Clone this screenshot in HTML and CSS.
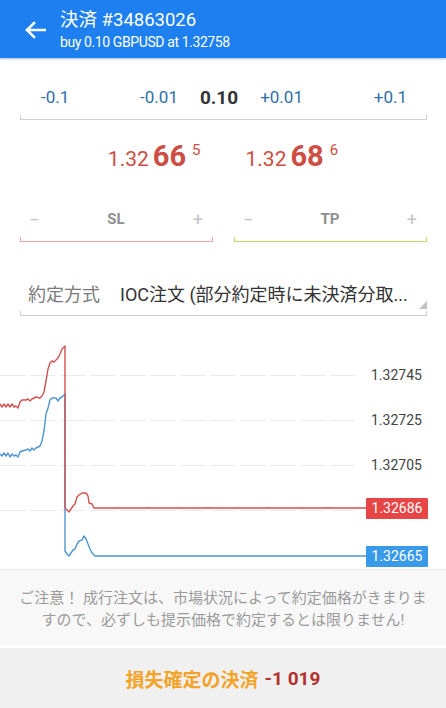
FILE: index.html
```html
<!DOCTYPE html>
<html lang="ja">
<head>
  <meta charset="UTF-8" />
  <meta name="viewport" content="width=device-width, initial-scale=1.0" />
  <title>決済 #34863026</title>
  <link rel="stylesheet" href="styles.css">
</head>
<body>

  <div class="header">
    <svg class="back" width="22" height="18" viewBox="0 0 22 18">
      <path d="M21 9H3M10 2L3 9l7 7" fill="none" stroke="#fff" stroke-width="2.6" stroke-linecap="square"/>
    </svg>
    <div class="titles">
      <div class="title">決済 #34863026</div>
      <div class="subtitle">buy 0.10 GBPUSD at 1.32758</div>
    </div>
  </div>

  <!-- volume stepper -->
  <div class="volume">
    <div class="vol-row">
      <span class="step">-0.1</span>
      <div class="vol-mid">
        <span class="step">-0.01</span>
        <span class="vol-value">0.10</span>
        <span class="step">+0.01</span>
      </div>
      <span class="step">+0.1</span>
    </div>
    <div class="underline"></div>
  </div>

  <div class="prices">
    <span class="price">1.32<b>66</b><sup>5</sup></span>
    <span class="price">1.32<b>68</b><sup>6</sup></span>
  </div>

  <div class="sltp">
    <div class="field">
      <div class="field-row"><span class="pm">−</span><span class="field-name">SL</span><span class="pm">+</span></div>
      <div class="underline sl"></div>
    </div>
    <div class="field">
      <div class="field-row"><span class="pm">−</span><span class="field-name">TP</span><span class="pm">+</span></div>
      <div class="underline tp"></div>
    </div>
  </div>

  <div class="fill">
    <div class="fill-row">
      <span class="fill-label">約定方式</span>
      <span class="fill-value">IOC注文 (部分約定時に未決済分取...</span>
      <span class="corner"></span>
    </div>
    <div class="underline"></div>
  </div>

  <div class="chart">
    <svg width="446" height="233" viewBox="0 0 446 233">
      <g stroke="#ebebeb" stroke-width="1" stroke-dasharray="26 4">
        <line x1="0" y1="39.5" x2="355" y2="39.5"/>
        <line x1="0" y1="84.5" x2="355" y2="84.5"/>
        <line x1="0" y1="129.5" x2="355" y2="129.5"/>
        <line x1="0" y1="174.5" x2="355" y2="174.5"/>
      </g>
      <polyline fill="none" stroke="#4f95cf" stroke-width="1.4" stroke-linejoin="round"
        points="0,118 2,120 4,117 6,120 8,117 10,121 12,118 14,120 16,119 18,121 20,116 22,115 26,114 28,113 30,115 32,112 34,114 36,112 40,110 42,105 44,95 46,78 48,72 50,64 52,62 56,62 58,65 60,62 62,61 64,59 65,58 65,215 67,218 69,220 71,217 73,214 75,213 77,208 79,205 82,204 84,200 86,203 88,208 90,213 92,217 95,220 366,220"/>
      <polyline fill="none" stroke="#d0524f" stroke-width="1.4" stroke-linejoin="round"
        points="0,68 2,71 4,68 6,71 8,68 10,71 12,68 14,71 16,70 18,72 20,66 22,64 26,64 28,63 30,65 32,63 36,61 40,62 42,60 44,56 46,45 48,33 50,27 52,25 54,26 56,24 58,22 60,18 62,13 64,11 65,10 65,172 67,174 69,176 71,173 73,170 75,168 77,161 79,159 82,157 86,157 88,160 89,167 92,168 94,172 366,172"/>
    </svg>
    <span class="axis" style="top: 30px">1.32745</span>
    <span class="axis" style="top: 75px">1.32725</span>
    <span class="axis" style="top: 120px">1.32705</span>
    <span class="tag bid" style="top: 162px">1.32686</span>
    <span class="tag ask" style="top: 210px">1.32665</span>
  </div>

  <div class="notice">
    ご注意！ 成行注文は、市場状況によって約定価格がきまりま<br>
    すので、必ずしも提示価格で約定するとは限りません!
  </div>

  <div class="close-btn">
    <span class="close-label">損失確定の決済</span> <span class="close-value">-1 019</span>
  </div>

</body>
</html>
```

FILE: styles.css
```css
body {
  margin: 0;
  width: 446px;
  height: 708px;
  overflow: hidden;
  background: #fff;
  font-family: Roboto, "Noto Sans CJK JP", sans-serif;
  color: #333;
}
.header {
  height: 58px;
  background-color: #1d7ff0;
  display: flex;
  align-items: center;
  color: #fff;
  box-shadow: 0 1px 2px rgba(0, 60, 160, 0.35);
}
.back {
  margin-left: 24px;
  margin-top: 2px;
}
.titles {
  margin-left: 14px;
}
.title {
  font-size: 18.5px;
  line-height: 24px;
}
.subtitle {
  font-size: 14px;
  line-height: 17px;
  margin-top: 2px;
  letter-spacing: -0.4px;
}
.underline {
  height: 4px;
  border: 1px solid #cfcfcf;
  border-top: none;
}
.volume {
  margin: 22px 19px 0 20px;
}
.vol-row {
  height: 34px;
  display: flex;
  align-items: center;
  justify-content: space-between;
  padding: 0 20px 0 21px;
  font-size: 17px;
  margin-bottom: 1px;
}
.vol-mid {
  display: flex;
  align-items: center;
  gap: 22px;
}
.step {
  color: #2f6ea9;
}
.vol-value {
  font-weight: bold;
  color: #333;
  font-size: 19px;
}
.prices {
  height: 64px;
  box-sizing: border-box;
  padding-top: 22px;
  display: flex;
  justify-content: center;
  gap: 45px;
  color: #cc4e44;
  font-size: 21px;
  line-height: 1;
}
.price b {
  font-size: 29px;
  margin-left: 4px;
}
.price sup {
  font-size: 15px;
  margin-left: 6px;
  vertical-align: 11px;
  line-height: 0;
}
.sltp {
  margin: 18px 19px 0 20px;
  display: flex;
  gap: 21px;
}
.field {
  flex: 1;
}
.field-row {
  height: 34px;
  display: flex;
  align-items: center;
  justify-content: space-between;
  padding: 0 10px 0 9px;
  margin-bottom: 1px;
  color: #8a8a8a;
}
.pm {
  font-size: 18px;
  color: #c4c4c4;
}
.field-name {
  font-size: 15px;
  font-weight: bold;
  color: #8f8f8f;
}
.underline.sl {
  border-color: #eaa7a7;
}
.underline.tp {
  border-color: #c2d66a;
}
.fill {
  margin: 34px 19px 0 20px;
}
.fill-row {
  height: 34px;
  display: flex;
  align-items: center;
  padding-left: 8px;
  font-size: 18px;
  margin-bottom: 1px;
}
.fill-label {
  color: #7a7a7a;
}
.fill-value {
  margin-left: 20px;
  color: #333;
  white-space: nowrap;
}
.corner {
  margin-left: auto;
  align-self: flex-end;
  margin-bottom: 1px;
  width: 0;
  height: 0;
  border-left: 8px solid transparent;
  border-bottom: 8px solid #c2c2c2;
}
.chart {
  position: relative;
  height: 233px;
  margin-top: 20px;
}
.chart svg {
  display: block;
}
.axis {
  position: absolute;
  left: 371px;
  font-size: 14px;
  line-height: 18px;
  color: #444;
}
.tag {
  position: absolute;
  left: 366px;
  width: 62px;
  height: 21px;
  line-height: 21px;
  text-align: center;
  font-size: 14px;
  color: #fff;
  border-radius: 1px;
}
.tag.bid {
  background-color: #e84646;
}
.tag.ask {
  background-color: #3a9aea;
}
.notice {
  height: 76px;
  box-sizing: border-box;
  border-top: 1px solid #e8e8e8;
  background-color: #f8f8f8;
  padding-top: 17px;
  text-align: center;
  font-size: 15px;
  line-height: 22px;
  color: #9a9a9a;
  white-space: nowrap;
}
.close-btn {
  margin-top: 3px;
  height: 60px;
  background-color: #f0f0f0;
  display: flex;
  align-items: center;
  justify-content: center;
  gap: 6px;
  font-size: 19px;
  font-weight: bold;
}
.close-label {
  color: #f3a428;
}
.close-value {
  color: #b3302e;
}
```
